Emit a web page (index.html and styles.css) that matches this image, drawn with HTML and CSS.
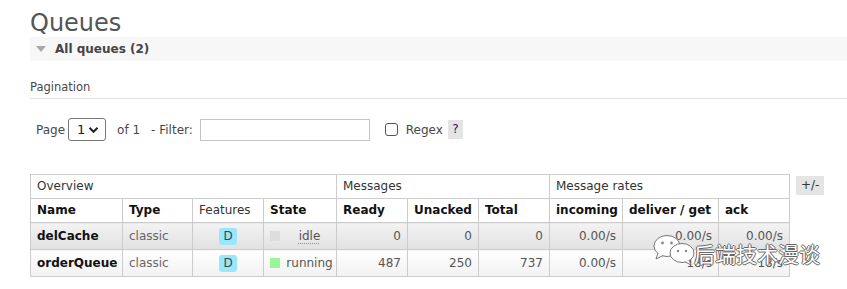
FILE: index.html
```html
<!DOCTYPE html>
<html lang="en">
<head>
    <meta charset="UTF-8">
    <title>RabbitMQ Management - Queues</title>
    <link rel="stylesheet" href="styles.css">
</head>
<body>
    <div class="main">
        <h1>Queues</h1>
        <div class="section-bar">
            <span class="arrow"></span>
            <span class="section-title">All queues (2)</span>
        </div>

        <h3 class="pagination-title">Pagination</h3>
        <div class="pagination">
            <span>Page</span>
            <div class="select-box">
                <span>1</span>
                <svg width="11" height="8" viewBox="0 0 11 8"><path d="M1.5 1.8 L5.5 5.8 L9.5 1.8" fill="none" stroke="#222" stroke-width="2"/></svg>
            </div>
            <span class="of">of 1</span>
            <span class="filter-label">- Filter:</span>
            <input type="text" class="filter-input">
            <span class="check"></span>
            <span class="regex">Regex</span>
            <span class="help">?</span>
        </div>

        <div class="table-wrap">
            <table class="queues">
                <colgroup>
                    <col class="w-name">
                    <col class="w-type">
                    <col class="w-feat">
                    <col class="w-state">
                    <col class="w-num">
                    <col class="w-num">
                    <col class="w-num">
                    <col class="w-rate">
                    <col class="w-deliver">
                    <col class="w-num">
                </colgroup>
                <thead>
                    <tr class="group-row">
                        <th colspan="4">Overview</th>
                        <th colspan="3">Messages</th>
                        <th colspan="3">Message rates</th>
                    </tr>
                    <tr class="col-row">
                        <th>Name</th>
                        <th>Type</th>
                        <th class="light">Features</th>
                        <th>State</th>
                        <th>Ready</th>
                        <th>Unacked</th>
                        <th>Total</th>
                        <th>incoming</th>
                        <th>deliver / get</th>
                        <th>ack</th>
                    </tr>
                </thead>
                <tbody>
                    <tr class="alt1">
                        <td class="name">delCache</td>
                        <td class="type">classic</td>
                        <td class="feat"><span class="badge">D</span></td>
                        <td><span class="state-dot grey"></span><span class="state-text idle">idle</span></td>
                        <td class="num">0</td>
                        <td class="num">0</td>
                        <td class="num">0</td>
                        <td class="num">0.00/s</td>
                        <td class="num">0.00/s</td>
                        <td class="num">0.00/s</td>
                    </tr>
                    <tr class="alt2">
                        <td class="name">orderQueue</td>
                        <td class="type">classic</td>
                        <td class="feat"><span class="badge">D</span></td>
                        <td><span class="state-dot green"></span><span class="state-text">running</span></td>
                        <td class="num">487</td>
                        <td class="num">250</td>
                        <td class="num">737</td>
                        <td class="num">0.00/s</td>
                        <td class="num">18/s</td>
                        <td class="num">18/s</td>
                    </tr>
                </tbody>
            </table>
            <span class="toggle">+/-</span>
        </div>
    </div>

    <!-- watermark over the table -->
    <div class="watermark">
        <svg width="48" height="32" viewBox="0 0 48 32">
            <ellipse cx="15" cy="12" rx="13" ry="10.5" fill="#fff" stroke="#777" stroke-width="1"/>
            <path d="M6 19 L4 25 L11 21.5" fill="#fff" stroke="#777" stroke-width="1"/>
            <circle cx="10.5" cy="9" r="1.4" fill="#888"/>
            <circle cx="19.5" cy="9" r="1.4" fill="#888"/>
            <ellipse cx="30" cy="19" rx="12" ry="9.5" fill="#fff" stroke="#777" stroke-width="1"/>
            <path d="M37 26 L39 31 L33 27.8" fill="#fff" stroke="#777" stroke-width="1"/>
            <circle cx="26" cy="17" r="1.2" fill="#888"/>
            <circle cx="34" cy="17" r="1.2" fill="#888"/>
        </svg>
        <span class="wm-text">后端技术漫谈</span>
    </div>
</body>
</html>
```

FILE: styles.css
```css
body {
    margin: 0;
    font-family: "DejaVu Sans", Verdana, sans-serif;
    color: #484848;
    background: #fff;
    position: relative;
}
.main {
    padding: 10px 0 0 30px;
}
h1 {
    margin: 0;
    font-size: 24px;
    font-weight: normal;
    line-height: 27px;
    color: #555;
}
.section-bar {
    display: flex;
    align-items: center;
    height: 24px;
    background-color: #f7f7f7;
    padding-left: 6px;
}
.arrow {
    width: 0;
    height: 0;
    border-left: 5px solid transparent;
    border-right: 5px solid transparent;
    border-top: 6px solid #a8a8a8;
    margin-right: 9px;
}
.section-title {
    font-size: 12px;
    font-weight: bold;
    color: #444;
}
.pagination-title {
    margin: 19px 0 0 0;
    font-size: 11.5px;
    font-weight: normal;
    color: #484848;
    padding-bottom: 4px;
    border-bottom: 1px solid #ddd;
}
.pagination {
    display: flex;
    align-items: center;
    margin: 19px 0 0 6px;
    font-size: 12px;
    color: #484848;
    height: 23px;
}
.select-box {
    display: flex;
    align-items: center;
    justify-content: space-between;
    box-sizing: border-box;
    width: 38px;
    height: 23px;
    margin-left: 3px;
    padding: 0 6px 0 8px;
    border: 1px solid #767676;
    border-radius: 3px;
    font-size: 13px;
    color: #222;
}
.of {
    margin-left: 11px;
}
.filter-label {
    margin-left: 11px;
}
.filter-input {
    box-sizing: border-box;
    width: 170px;
    height: 22px;
    margin: 0 0 0 7px;
    border: 1px solid #c4c4c4;
    padding: 0;
}
.check {
    box-sizing: border-box;
    width: 13px;
    height: 13px;
    margin-left: 15px;
    border: 1px solid #555;
    border-radius: 3px;
}
.regex {
    margin-left: 8px;
}
.help {
    box-sizing: border-box;
    width: 15px;
    height: 19px;
    margin-left: 5px;
    background-color: #e4e4e4;
    color: #302060;
    text-align: center;
    line-height: 19px;
}
.table-wrap {
    display: flex;
    align-items: flex-start;
    margin-top: 33px;
}
.queues {
    border-collapse: collapse;
    font-size: 12px;
    table-layout: fixed;
    width: 759px;
}
.w-name { width: 92px; }
.w-type { width: 70px; }
.w-feat { width: 71px; }
.w-state { width: 73px; }
.w-num { width: 71px; }
.w-rate { width: 73px; }
.w-deliver { width: 96px; }
.queues th,
.queues td {
    border: 1px solid #ccc;
    text-align: left;
    white-space: nowrap;
    overflow: visible;
}
.queues th {
    padding: 0 6px;
    height: 23px;
    line-height: 15px;
    background: #fff;
}
.group-row th {
    font-weight: normal;
    color: #333;
}
.col-row th {
    font-weight: bold;
    color: #111;
}
.col-row th.light {
    font-weight: normal;
    color: #333;
}
.queues td {
    padding: 0 6px;
    height: 26px;
    line-height: 15px;
    color: #555;
}
.alt1 td {
    background: linear-gradient(#f3f3f3, #e1e1e1);
}
.alt2 td {
    background: linear-gradient(#ffffff, #f2f2f2);
}
.queues td.name {
    font-weight: bold;
    color: #111;
}
.queues td.type {
    color: #666;
}
.queues td.feat {
    text-align: center;
}
.queues td.num {
    text-align: right;
    color: #555;
}
.badge {
    display: inline-block;
    width: 18px;
    height: 17px;
    line-height: 17px;
    margin: -1px 0;
    border-radius: 3px;
    background-color: #99e6ff;
    color: #444;
    text-align: center;
    vertical-align: middle;
}
.state-dot {
    display: inline-block;
    width: 10px;
    height: 10px;
    vertical-align: -1px;
}
.state-dot.grey {
    background-color: #ddd;
}
.state-dot.green {
    background-color: #98f898;
}
.state-text {
    display: inline-block;
    width: 47px;
    margin-left: 6px;
    text-align: center;
}
.state-text.idle {
    text-decoration: underline dotted #999;
    text-underline-offset: 3px;
}
.toggle {
    margin: 2px 0 0 6px;
    padding: 0 5px;
    background-color: #e4e4e4;
    font-size: 12px;
    line-height: 19px;
    color: #333;
}
.watermark {
    position: absolute;
    left: 652px;
    top: 232px;
    display: flex;
    align-items: center;
}
.wm-text {
    margin-left: -6px;
    margin-top: 6px;
    font-family: "Noto Sans CJK SC", sans-serif;
    font-size: 21px;
    color: #fff;
    text-shadow: 1px 0 0 #666, -1px 0 0 #666, 0 1px 0 #666, 0 -1px 0 #666;
}
```
